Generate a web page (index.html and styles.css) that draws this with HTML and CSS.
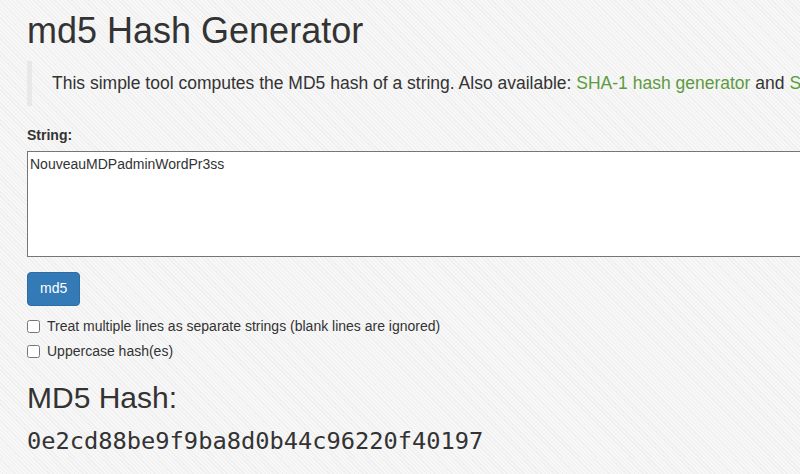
FILE: index.html
```html
<!DOCTYPE html>
<html lang="en">
<head>
<meta charset="utf-8">
<title>md5 Hash Generator</title>
<link rel="stylesheet" href="styles.css">
</head>
<body>
<div class="container">
  <h1 class="title">md5 Hash Generator</h1>
  <blockquote class="intro">This simple tool computes the MD5 hash of a string. Also available: <a href="#">SHA-1 hash generator</a> and <a href="#">SHA-256 hash generator</a>.</blockquote>
  <form class="hash-form">
    <div class="form-group">
      <label class="field-label" for="str">String:</label>
      <textarea id="str" class="field-input" rows="5">NouveauMDPadminWordPr3ss</textarea>
    </div>
    <button type="button" class="btn-primary">md5</button>
    <div class="checkbox"><label><input type="checkbox"><span>Treat multiple lines as separate strings (blank lines are ignored)</span></label></div>
    <div class="checkbox"><label><input type="checkbox"><span>Uppercase hash(es)</span></label></div>
  </form>
  <h2 class="result-title">MD5 Hash:</h2>
  <div class="hash">0e2cd88be9f9ba8d0b44c96220f40197</div>
</div>
</body>
</html>
```
FILE: styles.css
```css
html, body {
  overflow: hidden;
}
body {
  margin: 0;
  font-family: "Liberation Sans", Arial, sans-serif;
  font-size: 14px;
  line-height: 1.42857;
  color: #333;
  background-color: #f5f5f5;
  background-image: repeating-linear-gradient(45deg, #f7f7f7 0, #f7f7f7 2px, #efefef 2px, #efefef 3px);
}
.container {
  width: 1140px;
  padding: 11px 0 0 27px;
}
.title {
  margin: 0 0 10px;
  font-size: 36px;
  font-weight: 500;
  line-height: 1.1;
}
.intro {
  margin: 0 0 20px;
  padding: 10px 20px;
  border-left: 5px solid #e8e8e8;
  font-size: 17.5px;
  white-space: nowrap;
}
.intro a {
  color: #5d9b40;
  text-decoration: none;
}
.hash-form {
  margin: 0;
}
.form-group {
  margin-bottom: 15px;
}
.field-label {
  display: block;
  margin-bottom: 5px;
  font-weight: bold;
}
.field-input {
  display: block;
  box-sizing: border-box;
  width: 1000px;
  height: 106px;
  margin: 0;
  padding: 2px;
  border: 1px solid #767676;
  background: #fff;
  font: inherit;
  line-height: 20px;
  color: #333;
  resize: none;
}
.btn-primary {
  display: block;
  margin: 0;
  padding: 6px 12px;
  border: 1px solid #2e6da4;
  border-radius: 4px;
  background: #337ab7;
  color: #fff;
  font: inherit;
  line-height: 1.42857;
}
.checkbox {
  margin: 10px 0;
}
.checkbox + .checkbox {
  margin-top: -5px;
}
.checkbox label {
  display: flex;
  align-items: center;
  min-height: 20px;
  line-height: 20px;
}
.checkbox input {
  width: 13px;
  height: 13px;
  margin: 1px 7px 0 0;
}
.result-title {
  margin: 20px 0 10px;
  font-size: 30px;
  font-weight: 500;
  line-height: 1.1;
}
.hash {
  font-family: "DejaVu Sans Mono", monospace;
  font-size: 23.7px;
  line-height: 34px;
}
```
